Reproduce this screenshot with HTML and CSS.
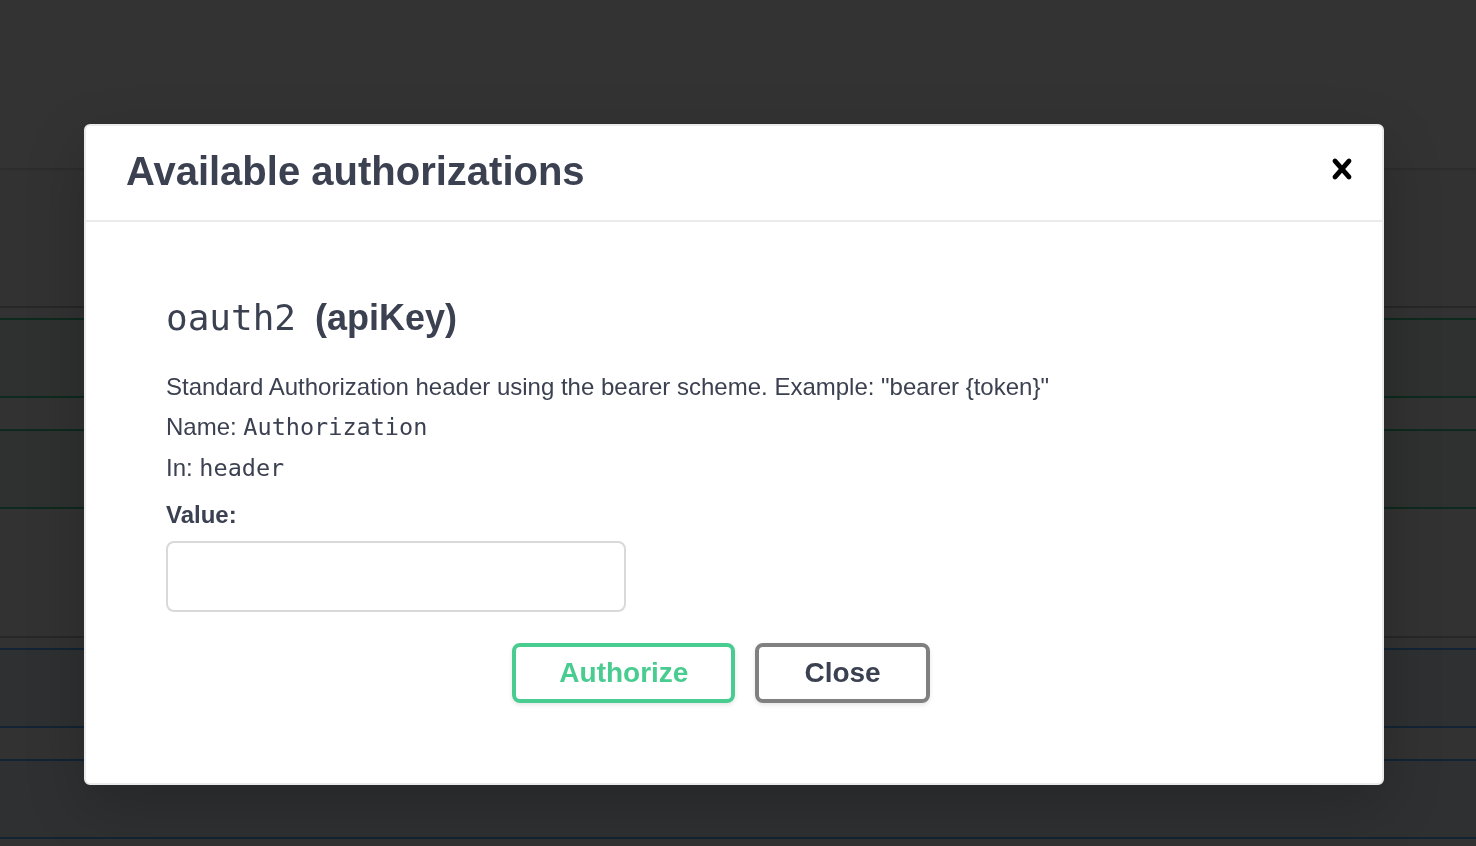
FILE: index.html
```html
<!DOCTYPE html>
<html lang="en">
<head>
<meta charset="utf-8">
<title>Available authorizations</title>
<link rel="stylesheet" href="styles.css">
</head>
<body>
<div class="page">
  <div class="scheme-container"></div>
  <section class="tag-section">
    <div class="tag-heading"></div>
    <div class="opblock opblock-post"></div>
    <div class="opblock opblock-post"></div>
  </section>
  <section class="tag-section second">
    <div class="tag-heading"></div>
    <div class="opblock opblock-get"></div>
    <div class="opblock opblock-get"></div>
  </section>
</div>

<div class="backdrop"></div>

<div class="modal" role="dialog" aria-labelledby="modal-title">
  <div class="modal-header">
    <h3 id="modal-title">Available authorizations</h3>
    <button class="close-modal" aria-label="Close">
      <svg width="40" height="40" viewBox="0 0 20 20" aria-hidden="true">
        <path d="M14.348 14.849c-.469.469-1.229.469-1.697 0L10 11.819l-2.651 3.029c-.469.469-1.229.469-1.697 0-.469-.469-.469-1.229 0-1.697l2.758-3.150-2.759-3.152c-.469-.469-.469-1.228 0-1.697.469-.469 1.228-.469 1.697 0L10 8.183l2.651-3.031c.469-.469 1.228-.469 1.697 0 .469.469.469 1.229 0 1.697l-2.758 3.152 2.758 3.150c.469.469.469 1.229 0 1.698z"/>
      </svg>
    </button>
  </div>
  <div class="modal-content">
    <div class="auth-container">
      <h4><code class="scheme-name">oauth2</code>&nbsp;(apiKey)</h4>
      <p class="desc">Standard Authorization header using the bearer scheme. Example: "bearer {token}"</p>
      <p class="meta">Name: <code>Authorization</code></p>
      <p class="meta in">In: <code>header</code></p>
      <label class="value-label" for="value">Value:</label>
      <input class="value-input" id="value" type="text">
      <div class="auth-btn-wrapper">
        <button class="btn authorize">Authorize</button>
        <button class="btn btn-close">Close</button>
      </div>
    </div>
  </div>
</div>
</body>
</html>
```

FILE: styles.css
```css
html, body {
  margin: 0;
  padding: 0;
}

body {
  background: #f7f7f7;
  width: 1476px;
  height: 846px;
  overflow: hidden;
  font-family: "Liberation Sans", Arial, sans-serif;
}

/* underlying page (dimmed by the backdrop) */
.page {
  display: flex;
  flex-direction: column;
}

.scheme-container {
  height: 168px;
  background: #ffffff;
  box-shadow: 0 1px 3px rgba(0, 0, 0, 0.18);
}

.tag-section {
  display: flex;
  flex-direction: column;
}

.tag-heading {
  height: 138px;
  border-bottom: 2px solid rgba(59, 65, 81, 0.3);
  margin-bottom: 10px;
}

.tag-section.second .tag-heading {
  height: 127px;
}

.opblock {
  height: 76px;
  margin: 0 -10px 31px;
  border: 2px solid;
}

.opblock:last-child {
  margin-bottom: 0;
}

.opblock-post {
  border-color: #49cc90;
  background: rgba(73, 204, 144, 0.1);
}

.opblock-get {
  border-color: #61affe;
  background: rgba(97, 175, 254, 0.1);
}

.backdrop {
  position: fixed;
  inset: 0;
  background: rgba(0, 0, 0, 0.8);
}

/* modal */
.modal {
  position: absolute;
  left: 84px;
  top: 124px;
  width: 1300px;
  box-sizing: border-box;
  background: #ffffff;
  border: 2px solid #ebebeb;
  border-radius: 6px;
  box-shadow: 0 20px 60px 0 rgba(0, 0, 0, 0.2);
  color: #3b4151;
}

.modal-header {
  display: flex;
  align-items: center;
  padding: 22px 0 26px;
  border-bottom: 2px solid #ebebeb;
}

.modal-header h3 {
  flex: 1;
  margin: 0;
  padding: 0 40px;
  font-size: 40px;
  line-height: 46px;
  font-weight: 700;
  color: #3b4151;
}

.close-modal {
  padding: 0 20px 0 20px;
  margin: 0 0 4px 0;
  border: none;
  background: none;
  display: flex;
  align-items: center;
  cursor: pointer;
}

.close-modal svg {
  display: block;
  fill: #000000;
}

.modal-content {
  padding: 40px;
}

.auth-container {
  padding: 20px 40px;
  display: flex;
  flex-direction: column;
  align-items: flex-start;
}

.auth-container h4 {
  margin: 11px 0 30px;
  font-size: 36px;
  line-height: 50px;
  font-weight: 700;
  color: #3b4151;
}

.auth-container .scheme-name {
  font-family: "DejaVu Sans Mono", "Liberation Mono", monospace;
  font-weight: 400;
  font-size: 36px;
  margin-right: 9px;
}

.auth-container p {
  margin: 0 0 12px;
  font-size: 24px;
  line-height: 28px;
  color: #3b4151;
}

.auth-container p.in {
  margin-top: 1px;
  margin-bottom: 19px;
}

.auth-container code {
  font-family: "DejaVu Sans Mono", "Liberation Mono", monospace;
  font-size: 23.5px;
  line-height: 1;
}

.value-label {
  font-size: 24px;
  line-height: 28px;
  font-weight: 700;
  margin-bottom: 12px;
}

.value-input {
  box-sizing: border-box;
  width: 460px;
  height: 71px;
  margin: 0 0 11px;
  padding: 16px 20px;
  border: 2px solid #d9d9d9;
  border-radius: 8px;
  background: #ffffff;
  font-size: 24px;
  outline: none;
}

.auth-btn-wrapper {
  align-self: stretch;
  display: flex;
  justify-content: center;
  padding: 20px 6px 20px 0;
}

.btn {
  font-family: "Liberation Sans", Arial, sans-serif;
  font-size: 28px;
  line-height: 32px;
  font-weight: 700;
  padding: 10px 46px;
  margin-right: 20px;
  border: 4px solid #808080;
  border-radius: 8px;
  background: transparent;
  box-shadow: 0 2px 4px rgba(0, 0, 0, 0.1);
  color: #3b4151;
  cursor: pointer;
}

.btn.btn-close {
  padding: 10px 45px;
}

.btn.authorize {
  color: #49cc90;
  border-color: #49cc90;
  padding: 10px 43px;
}
```
